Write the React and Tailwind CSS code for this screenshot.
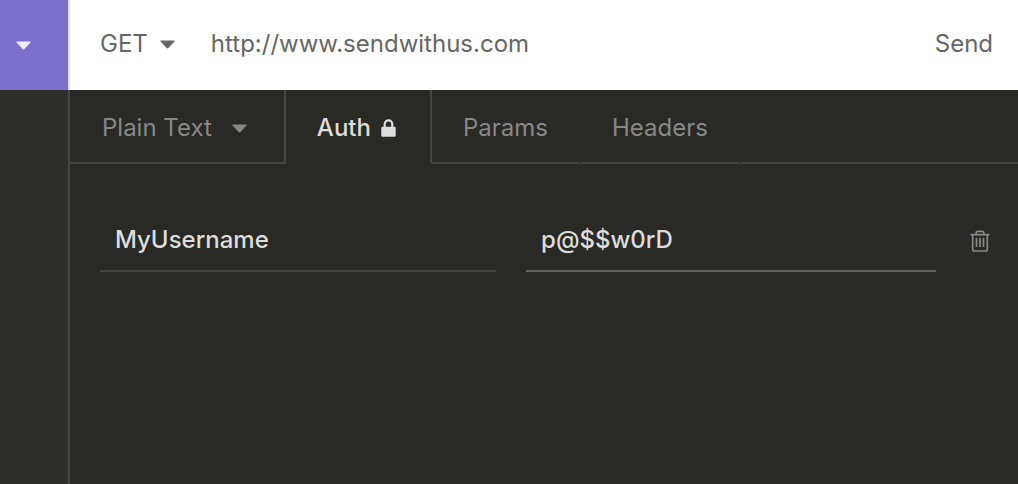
import React, { useState } from "react";

function Caret({ className }) {
  return (
    <svg aria-hidden="true" viewBox="0 0 15 9" className={"h-[9px] w-[15px] " + className}>
      <path d="M1 0.5h13q1.2 0 .4 1L8.4 8q-.9.9-1.800 0L.6 1.500Q-.2.5 1 .5z" fill="currentColor" />
    </svg>
  );
}

function LockIcon() {
  return (
    <svg aria-hidden="true" viewBox="0 0 15 18" className="h-[18px] w-[15px]">
      <path d="M3.700 8.500V5.200a3.800 3.800 0 0 1 7.600 0v3.300" fill="none" stroke="currentColor" strokeWidth="2.200" />
      <rect x="0.300" y="7.800" width="14.400" height="9.900" rx="1.200" fill="currentColor" />
    </svg>
  );
}

function TrashIcon() {
  return (
    <svg aria-hidden="true" viewBox="0 0 20 22" className="h-[22px] w-5" fill="none" stroke="currentColor" strokeWidth="1.700" strokeLinejoin="round">
      <path d="M0.500 4.700h19" />
      <path d="M6.200 4.500V3q0-1.700 1.700-1.700h4.200q1.700 0 1.700 1.700v1.500" />
      <path d="M2.700 4.700v14.600q0 1.700 1.700 1.700h11.200q1.700 0 1.700-1.700V4.700" />
      <path d="M6.500 8v9M10 8v9M13.500 8v9" />
    </svg>
  );
}

function Dropdown({ label, options, className }) {
  return (
    <span className="grid items-center">
      <select aria-label={label} className={"col-start-1 row-start-1 field-sizing-content cursor-pointer appearance-none bg-transparent outline-none " + className}>
        {options.map((option) => (
          <option key={option}>{option}</option>
        ))}
      </select>
      <Caret className="pointer-events-none col-start-1 row-start-1 justify-self-end" />
    </span>
  );
}

const tab = "flex items-center border-r-2 border-b-2 pt-1 ";
const field = "h-16 min-w-0 border-b-2 bg-transparent px-[15px] font-medium outline-none ";

export default function App() {
  const [url, setUrl] = useState("http://www.sendwithus.com");
  const [user, setUser] = useState("MyUsername");
  const [password, setPassword] = useState("p@$$w0rD");
  return (
    <div className="flex min-h-screen bg-[#292a25] font-['Inter',sans-serif] text-2xl text-[#dddddd]">
      <aside className="flex w-[70px] shrink-0 flex-col bg-[#2e2f2b]">
        <button aria-label="Workspace menu" className="flex h-[90px] items-center border-r-2 border-[#e0e0e0] bg-[#7d70cc] pl-4 text-[#eeeeee]">
          <Caret className="" />
        </button>
        <div className="flex-1 border-r-2 border-[#444541]" />
      </aside>

      <main className="flex min-w-0 flex-1 flex-col">
        <form className="flex h-[90px] items-center bg-white pr-[25px] pb-0.5 pl-[30px] text-[#666666]" onSubmit={(e) => e.preventDefault()}>
          <Dropdown label="Method" options={["GET"]} className="pr-[27px]" />
          <input
            aria-label="Request URL"
            value={url}
            onChange={(e) => setUrl(e.target.value)}
            className="ml-9 min-w-0 flex-1 bg-transparent outline-none"
          />
          <button type="submit">Send</button>
        </form>

        <nav className="flex h-[74px] text-[#888888]">
          <div className={tab + "border-[#444541] pr-[37px] pl-8"}>
            <Dropdown label="Body type" options={["Plain Text"]} className="pr-[35px]" />
          </div>
          <button className={tab + "gap-2.5 border-r-[#444541] border-b-transparent pr-[34px] pl-[31px] font-medium text-[#dddddd]"}>
            Auth
            <LockIcon />
          </button>
          <button className={tab + "border-r-transparent border-b-[#444541] px-[31px]"}>Params</button>
          <button className={tab + "border-r-transparent border-b-[#444541] px-[31px]"}>Headers</button>
          <div className="flex-1 border-b-2 border-[#444541]" />
        </nav>

        <div className="flex items-center pt-11 pr-7 pl-[30px]">
          <input
            aria-label="Username"
            value={user}
            onChange={(e) => setUser(e.target.value)}
            className={field + "flex-[395] border-[#444545]"}
          />
          <input
            aria-label="Password"
            value={password}
            onChange={(e) => setPassword(e.target.value)}
            className={field + "ml-[30px] flex-[410] border-[#5e5f5e]"}
          />
          <button aria-label="Delete credentials" className="ml-[34px] pt-0.5 text-[#888888]">
            <TrashIcon />
          </button>
        </div>
      </main>
    </div>
  );
}
